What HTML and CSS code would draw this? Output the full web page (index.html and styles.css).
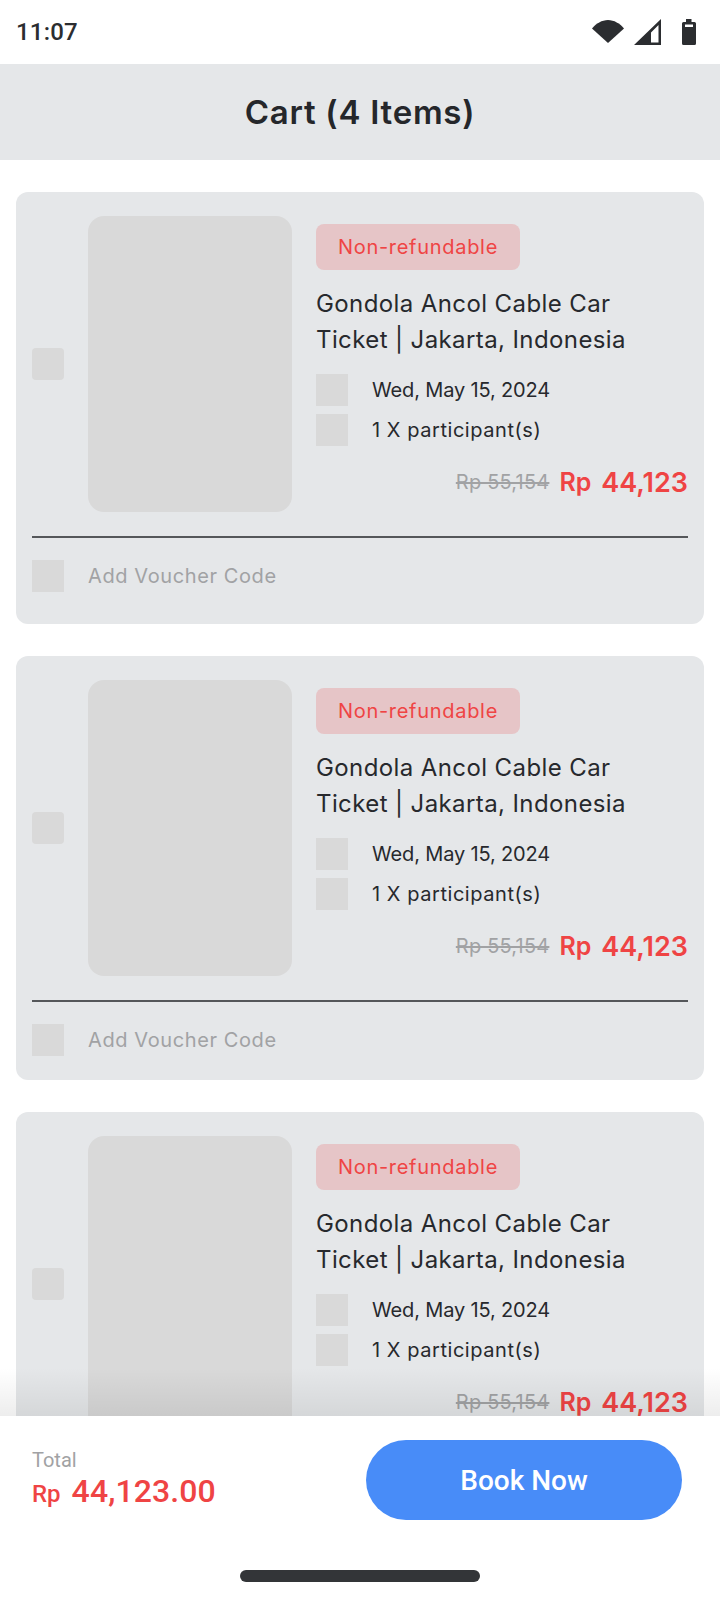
FILE: index.html
```html
<!DOCTYPE html>
<html lang="en">
<head>
<meta charset="UTF-8">
<meta name="viewport" content="width=device-width, initial-scale=1.0">
<title>Cart</title>
<link rel="stylesheet" href="styles.css">
</head>
<body>

<div class="screen">
    <div class="status-bar">
        <span class="clock">11:07</span>
        <div class="status-icons">
            <svg class="icon-wifi" width="32" height="23" viewBox="0 0 32 23"><path d="M0 8.500C4 3.500 10 0 16 0s12 3.500 16 8.500L16 23z" fill="#2b2d30"/></svg>
            <svg class="icon-signal" width="27" height="26" viewBox="0 0 27 26"><path d="M27 0v26H0zM24.500 6 17 13.500V23.500h7.500z" fill="#2b2d30" fill-rule="evenodd"/></svg>
            <svg class="icon-battery" width="14" height="26" viewBox="0 0 14 26"><path d="M4 0h5.500v3H12.500a1.500 1.500 0 0 1 1.500 1.500V24.500a1.500 1.500 0 0 1-1.500 1.500H1.500A1.500 1.500 0 0 1 0 24.500V4.500A1.500 1.500 0 0 1 1.500 3H4zM3 5.500v2.500h8V5.500z" fill="#2b2d30" fill-rule="evenodd"/></svg>
        </div>
    </div>

    <div class="page-header">
        <h1>Cart (4 Items)</h1>
    </div>

    <div class="cart-list">
        <div class="cart-card cart-card-first">
            <div class="cart-main">
                <div class="checkbox"></div>
                <div class="thumb"></div>
                <div class="info">
                    <div class="badge">Non-refundable</div>
                    <div class="title">Gondola Ancol Cable Car Ticket | Jakarta, Indonesia</div>
                    <div class="meta-row meta-first"><div class="ph-icon"></div><span class="meta-date">Wed, May 15, 2024</span></div>
                    <div class="meta-row"><div class="ph-icon"></div><span class="meta-people">1 X participant(s)</span></div>
                    <div class="price-row">
                        <span class="old-price">Rp 55,154</span>
                        <span class="cur">Rp</span>
                        <span class="price">44,123</span>
                    </div>
                </div>
            </div>
            <div class="voucher"><div class="ph-icon"></div><span>Add Voucher Code</span></div>
        </div>

        <div class="cart-card">
            <div class="cart-main">
                <div class="checkbox"></div>
                <div class="thumb"></div>
                <div class="info">
                    <div class="badge">Non-refundable</div>
                    <div class="title">Gondola Ancol Cable Car Ticket | Jakarta, Indonesia</div>
                    <div class="meta-row meta-first"><div class="ph-icon"></div><span class="meta-date">Wed, May 15, 2024</span></div>
                    <div class="meta-row"><div class="ph-icon"></div><span class="meta-people">1 X participant(s)</span></div>
                    <div class="price-row">
                        <span class="old-price">Rp 55,154</span>
                        <span class="cur">Rp</span>
                        <span class="price">44,123</span>
                    </div>
                </div>
            </div>
            <div class="voucher"><div class="ph-icon"></div><span>Add Voucher Code</span></div>
        </div>

        <!-- third card runs under the bottom bar, its voucher row is out of view -->
        <div class="cart-card">
            <div class="cart-main">
                <div class="checkbox"></div>
                <div class="thumb"></div>
                <div class="info">
                    <div class="badge">Non-refundable</div>
                    <div class="title">Gondola Ancol Cable Car Ticket | Jakarta, Indonesia</div>
                    <div class="meta-row meta-first"><div class="ph-icon"></div><span class="meta-date">Wed, May 15, 2024</span></div>
                    <div class="meta-row"><div class="ph-icon"></div><span class="meta-people">1 X participant(s)</span></div>
                    <div class="price-row">
                        <span class="old-price">Rp 55,154</span>
                        <span class="cur">Rp</span>
                        <span class="price">44,123</span>
                    </div>
                </div>
            </div>
        </div>
    </div>

    <div class="bottom-bar">
        <div class="bottom-row">
            <div class="total">
                <div class="total-label">Total</div>
                <div class="total-value"><span class="total-cur">Rp</span><span class="total-num">44,123.00</span></div>
            </div>
            <button class="book-btn">Book Now</button>
        </div>
        <div class="home-bar"></div>
    </div>
</div>

</body>
</html>
```

FILE: styles.css
```css
* {
    box-sizing: border-box;
}
body {
    margin: 0;
    background: #fff;
    font-family: Inter, "Noto Sans", sans-serif;
    color: #27292d;
}
.screen {
    width: 720px;
    height: 1600px;
    display: flex;
    flex-direction: column;
    overflow: hidden;
}
.status-bar {
    height: 64px;
    flex: none;
    display: flex;
    align-items: center;
    justify-content: space-between;
    padding: 0 24px 0 16px;
}
.clock {
    font-family: Roboto, sans-serif;
    font-size: 24px;
    font-weight: 500;
    letter-spacing: 0.2px;
    color: #2b2d30;
}
.status-icons {
    display: flex;
    align-items: flex-start;
    gap: 10px;
}
.icon-battery {
    margin-left: 11px;
}
.icon-wifi {
    margin-top: 1px;
}
.page-header {
    height: 96px;
    flex: none;
    background: #e5e7e9;
    display: flex;
    align-items: center;
    justify-content: center;
}
.page-header h1 {
    margin: 0;
    font-size: 33px;
    font-weight: 600;
    letter-spacing: 0.75px;
    color: #25272b;
}
.cart-list {
    flex: 1;
    min-height: 0;
    padding: 32px 16px 0;
    display: flex;
    flex-direction: column;
    gap: 32px;
}
.cart-card {
    flex: none;
    background: #e5e7e9;
    border-radius: 12px;
    padding: 24px 16px;
}
.cart-card-first {
    padding-bottom: 32px;
}
.cart-main {
    display: flex;
    align-items: center;
    gap: 24px;
    padding-bottom: 24px;
    border-bottom: 2px solid #55575a;
}
.checkbox {
    width: 32px;
    height: 32px;
    flex: none;
    background: #d9d9d9;
    border-radius: 4px;
}
.thumb {
    width: 204px;
    height: 296px;
    flex: none;
    background: #d9d9d9;
    border-radius: 16px;
}
.info {
    flex: 1;
    height: 296px;
    padding-top: 8px;
}
.badge {
    width: 204px;
    height: 46px;
    display: flex;
    align-items: center;
    justify-content: center;
    background: #e6c5c7;
    border-radius: 8px;
    font-size: 20px;
    letter-spacing: 0.7px;
    color: #ef4444;
}
.title {
    margin-top: 16px;
    font-size: 24px;
    line-height: 36px;
    letter-spacing: 0.4px;
}
.meta-row {
    display: flex;
    align-items: center;
    gap: 24px;
    margin-top: 8px;
    font-size: 20px;
}
.meta-first {
    margin-top: 16px;
}
.meta-date {
    letter-spacing: -0.15px;
}
.meta-people {
    letter-spacing: 0.55px;
}
.ph-icon {
    width: 32px;
    height: 32px;
    flex: none;
    background: #d9d9d9;
}
.price-row {
    margin-top: 18px;
    display: flex;
    align-items: center;
    justify-content: flex-end;
    height: 36px;
}
.old-price {
    font-size: 20px;
    letter-spacing: 0.2px;
    color: #a1a2a4;
    text-decoration: line-through;
    margin-right: 10px;
}
.cur {
    font-size: 25px;
    font-weight: 600;
    color: #ef4444;
    margin-right: 10px;
}
.price {
    font-size: 27px;
    font-weight: 600;
    color: #ef4444;
}
.voucher {
    margin-top: 22px;
    display: flex;
    align-items: center;
    gap: 24px;
    font-size: 20px;
    letter-spacing: 0.6px;
    color: #a1a2a4;
}
.bottom-bar {
    position: relative;
    height: 184px;
    flex: none;
    background: #fff;
    padding-top: 24px;
}
.bottom-bar::before {
    content: "";
    position: absolute;
    left: 0;
    right: 0;
    top: -48px;
    height: 48px;
    background: linear-gradient(rgba(0, 0, 0, 0), rgba(0, 0, 0, 0.07));
}
.bottom-row {
    display: flex;
    align-items: center;
    justify-content: space-between;
    padding: 0 38px 0 32px;
}
.total {
    font-family: Roboto, sans-serif;
}
.total-label {
    width: fit-content;
    font-size: 20px;
    color: #a1a2a4;
    line-height: 24px;
}
.total-value {
    display: flex;
    align-items: baseline;
    gap: 11px;
    color: #ef4444;
    font-weight: 500;
    line-height: 38px;
}
.total-cur {
    font-size: 24px;
}
.total-num {
    font-size: 32px;
    letter-spacing: 0.1px;
}
.book-btn {
    width: 316px;
    height: 80px;
    border: none;
    border-radius: 40px;
    background: #488cf8;
    color: #fff;
    font-family: Roboto, sans-serif;
    font-size: 28px;
    font-weight: 500;
}
.home-bar {
    width: 240px;
    height: 12px;
    margin: 50px auto 0;
    background: #333538;
    border-radius: 6px;
}
```
